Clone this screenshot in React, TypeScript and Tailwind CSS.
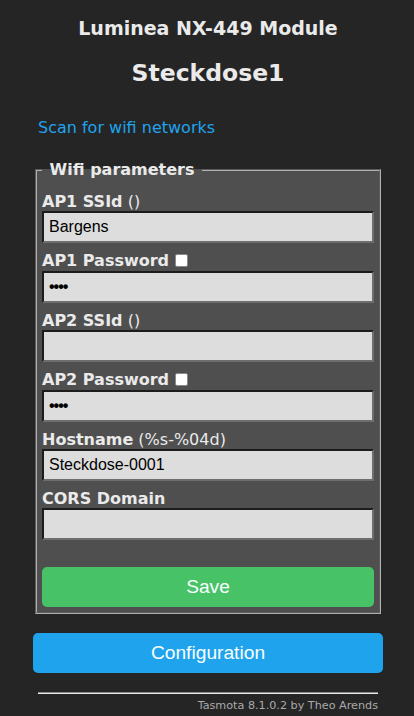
import React from "react";

type Field = {
  label: string;
  hint?: string;
  value: string;
  password?: boolean;
};

const fields: Field[] = [
  { label: "AP1 SSId", hint: " ()", value: "Bargens" },
  { label: "AP1 Password", value: "••••", password: true },
  { label: "AP2 SSId", hint: " ()", value: "" },
  { label: "AP2 Password", value: "••••", password: true },
  { label: "Hostname", hint: " (%s-%04d)", value: "Steckdose-0001" },
  { label: "CORS Domain", value: "" },
];

const Checkbox = () => (
  <span className="ml-[6px] inline-block h-[13px] w-[13px] rounded-[2px] border border-[#8a8a8a] bg-white align-[-1px]" />
);

const FieldRow = ({ field }: { field: Field }) => (
  <div className="flex flex-col">
    <div className="leading-[19.4px]">
      <b>{field.label}</b>
      {field.hint && <span>{field.hint}</span>}
      {field.password && <Checkbox />}
    </div>
    <div className="flex h-[32px] items-center border-2 border-b-[#6e6e6e] border-l-[#1c1c1c] border-r-[#6e6e6e] border-t-[#1c1c1c] bg-[#dddddd] px-[5px] font-['Liberation_Sans',Arial,sans-serif] text-[16px] text-black">
      {field.password ? (
        <span className="font-bold tracking-[-1px]">{field.value}</span>
      ) : (
        field.value
      )}
    </div>
  </div>
);

export default function App() {
  return (
    <div className="min-h-screen bg-[#252525] font-['DejaVu_Sans',Verdana,sans-serif] text-[16px] text-[#eaeaea]">
      <div className="ml-[33px] w-[350px] pt-[17px]">
        {/* header */}
        <div className="text-center">
          <h3 className="text-[19px] font-bold leading-[22px]">Luminea NX-449 Module</h3>
          <h2 className="mt-[20px] text-[23.5px] font-bold leading-[28px]">Steckdose1</h2>
        </div>

        <div className="mt-[31px] pl-[5px] leading-[19px]">
          <a href="#" className="text-[#1fa3ec]">
            Scan for wifi networks
          </a>
        </div>

        {/* wifi form */}
        <fieldset className="mx-[2px] mt-[23px] border-2 border-[#b0b0b0] bg-[#4f4f4f] px-[5px] pb-[5px] pt-[13px] [border-style:groove]">
          <legend className="px-[2px] font-bold leading-[19px]">{"\u00a0Wifi parameters\u00a0"}</legend>
          <div className="flex flex-col gap-[8px]">
            {fields.map((f) => (
              <FieldRow key={f.label} field={f} />
            ))}
          </div>
          <button className="mt-[27px] h-[40px] w-full rounded-[5px] bg-[#47c266] font-['Liberation_Sans',Arial,sans-serif] text-[19.2px] text-[#faffff]">
            Save
          </button>
        </fieldset>

        <button className="mt-[19px] h-[40px] w-full rounded-[5px] bg-[#1fa3ec] font-['Liberation_Sans',Arial,sans-serif] text-[19.2px] text-[#faffff]">
          Configuration
        </button>

        {/* footer */}
        <div className="px-[5px] text-right text-[11.2px]">
          <hr className="mt-[19px] border-b border-t border-b-[#eaeaea] border-t-[#8a8a8a]" />
          <a href="#" className="mt-[5px] block leading-[13px] text-[#aaaaaa]">
            Tasmota 8.1.0.2 by Theo Arends
          </a>
        </div>
      </div>
    </div>
  );
}
